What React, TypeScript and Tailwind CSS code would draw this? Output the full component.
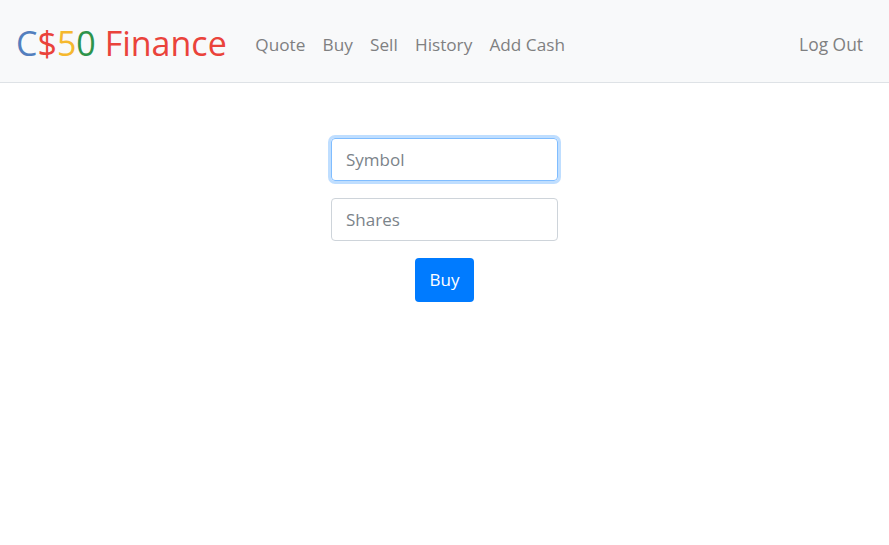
import React from "react";

const links = ["Quote", "Buy", "Sell", "History", "Add Cash"];

export default function App() {
  return (
    <div
      className="min-h-screen bg-white text-[#212529]"
      style={{ fontFamily: '"Open Sans", "Noto Sans", sans-serif' }}
    >
      <nav className="flex h-[83px] items-center border-b border-[#dee2e6] bg-[#f8f9fa] px-4">
        <a href="#" className="mr-[20px] pt-[4px] text-[34px] leading-none">
          <span className="text-[#537fbe]">C</span>
          <span className="text-[#ea433b]">$</span>
          <span className="text-[#f5b82e]">5</span>
          <span className="text-[#2e944b]">0</span>{" "}
          <span className="text-[#ea433b]">Finance</span>
        </a>
        <ul className="flex flex-1 items-center pt-[7px]">
          {links.map((l) => (
            <li key={l}>
              <a href="#" className="block px-[8.6px] text-[17.2px] text-[#7f8081]">
                {l}
              </a>
            </li>
          ))}
        </ul>
        <a href="#" className="block px-[10px] pt-[7px] text-[17.4px] text-[#7f8081]">
          Log Out
        </a>
      </nav>
      <main className="flex flex-col items-center pt-[55px]">
        <input
          autoFocus
          autoComplete="off"
          placeholder="Symbol"
          className="h-[43px] w-[227px] rounded-[4px] border border-[#80bdff] px-[14px] text-[17px] text-[#495057] shadow-[0_0_0_3px_rgba(0,123,255,0.25)] outline-none placeholder:text-[#7b838a]"
        />
        <input
          placeholder="Shares"
          className="mt-[17px] h-[43px] w-[227px] rounded-[4px] border border-[#ced4da] px-[14px] text-[17px] text-[#495057] outline-none placeholder:text-[#7b838a]"
        />
        <button className="mt-[17px] h-[44px] w-[59px] rounded-[4px] bg-[#007bff] text-[17px] text-white">
          Buy
        </button>
      </main>
    </div>
  );
}
